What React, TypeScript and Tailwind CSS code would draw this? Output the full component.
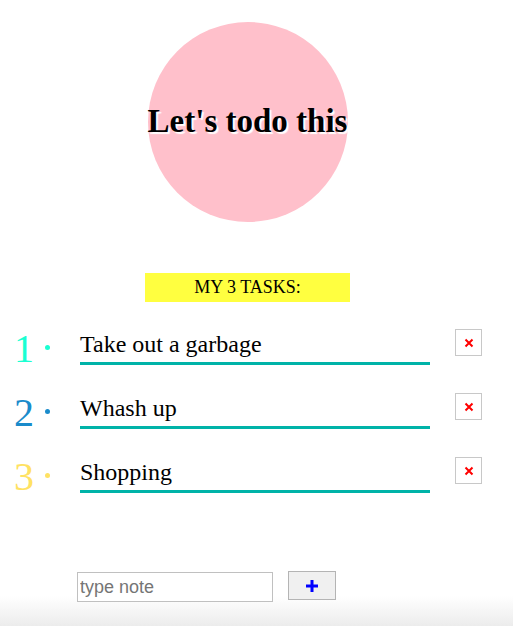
import { useState } from 'react'

interface Task { id: number; text: string; color: string }

const initialTasks: Task[] = [
  { id: 1, text: 'Take out a garbage', color: 'text-[#1affd2]' },
  { id: 2, text: 'Whash up', color: 'text-[#1a8bcb]' },
  { id: 3, text: 'Shopping', color: 'text-[#ffe263]' },
]

const dotColors: Record<number, string> = {
  1: 'bg-[#1affd2]',
  2: 'bg-[#1a8bcb]',
  3: 'bg-[#ffe263]',
}

export default function App() {
  const [tasks, setTasks] = useState<Task[]>(initialTasks)
  const [note, setNote] = useState('')

  function removeTask(id: number) {
    setTasks((t) => t.filter((x) => x.id !== id))
  }

  function addTask() {
    if (!note.trim()) return
    const id = Math.max(0, ...tasks.map((t) => t.id)) + 1
    setTasks((t) => [...t, { id, text: note.trim(), color: 'text-[#1a8bcb]' }])
    setNote('')
  }

  return (
    <div className="h-[626px] w-full overflow-hidden bg-[linear-gradient(to_bottom,#ffffff_0px,#ffffff_596px,#ececec_626px)] font-['Liberation_Serif',serif] text-black">
      <div className="pr-[18px] pt-[22px]">
        <div className="mx-auto flex h-[200px] w-[200px] items-center justify-center rounded-full bg-[#ffc0cb]">
          <h1 className="whitespace-nowrap text-[33px] font-bold [text-shadow:2px_2px_1px_#ffffff]">Let's todo this</h1>
        </div>

        <div className="mx-auto mt-[51px] flex h-[29px] w-[205px] items-center justify-center bg-[#ffff40] text-[18px]">
          MY {tasks.length} TASKS:
        </div>
      </div>

      <ul className="mt-[27px]">
        {tasks.map((t, i) => (
          <li key={t.id} className="flex h-[64px] items-start">
            <span className={`w-[31px] pl-[14px] text-[40px] leading-[40px] ${t.color}`}>{i + 1}</span>
            <span className={`ml-[14px] mt-[16px] h-[5px] w-[5px] rounded-full ${dotColors[t.id] ?? 'bg-[#1a8bcb]'}`} />
            <div className="ml-[30px] mt-[1px] w-[350px] border-b-[3px] border-[#00b3a8] pb-[4px] text-[24px] leading-[28px]">
              {t.text}
            </div>
            <button
              onClick={() => removeTask(t.id)}
              className="ml-[25px] flex h-[27px] w-[27px] items-center justify-center border border-[#c8c8c8] bg-white"
            >
              <svg width="10" height="10" viewBox="0 0 10 10">
                <path d="M1.5 1.5 L8.5 8.5 M8.5 1.5 L1.5 8.5" stroke="#ff0000" strokeWidth="2" />
              </svg>
            </button>
          </li>
        ))}
      </ul>

      <div className="ml-[77px] mt-[51px] flex items-start gap-[15px]">
        <input
          value={note}
          onChange={(e) => setNote(e.target.value)}
          placeholder="type note"
          className="h-[30px] w-[196px] border border-[#c0c0c0] bg-white px-[2px] font-['Liberation_Sans',sans-serif] text-[18px] text-black outline-none placeholder:text-[#757575]"
        />
        <button
          onClick={addTask}
          className="-mt-[1px] flex h-[29px] w-[48px] items-center justify-center border border-[#b4b4b4] bg-[#f0f0f0]"
        >
          <svg width="14" height="14" viewBox="0 0 14 14">
            <path d="M7 1 V13 M1 7 H13" stroke="#0000ff" strokeWidth="3" />
          </svg>
        </button>
      </div>
    </div>
  )
}
